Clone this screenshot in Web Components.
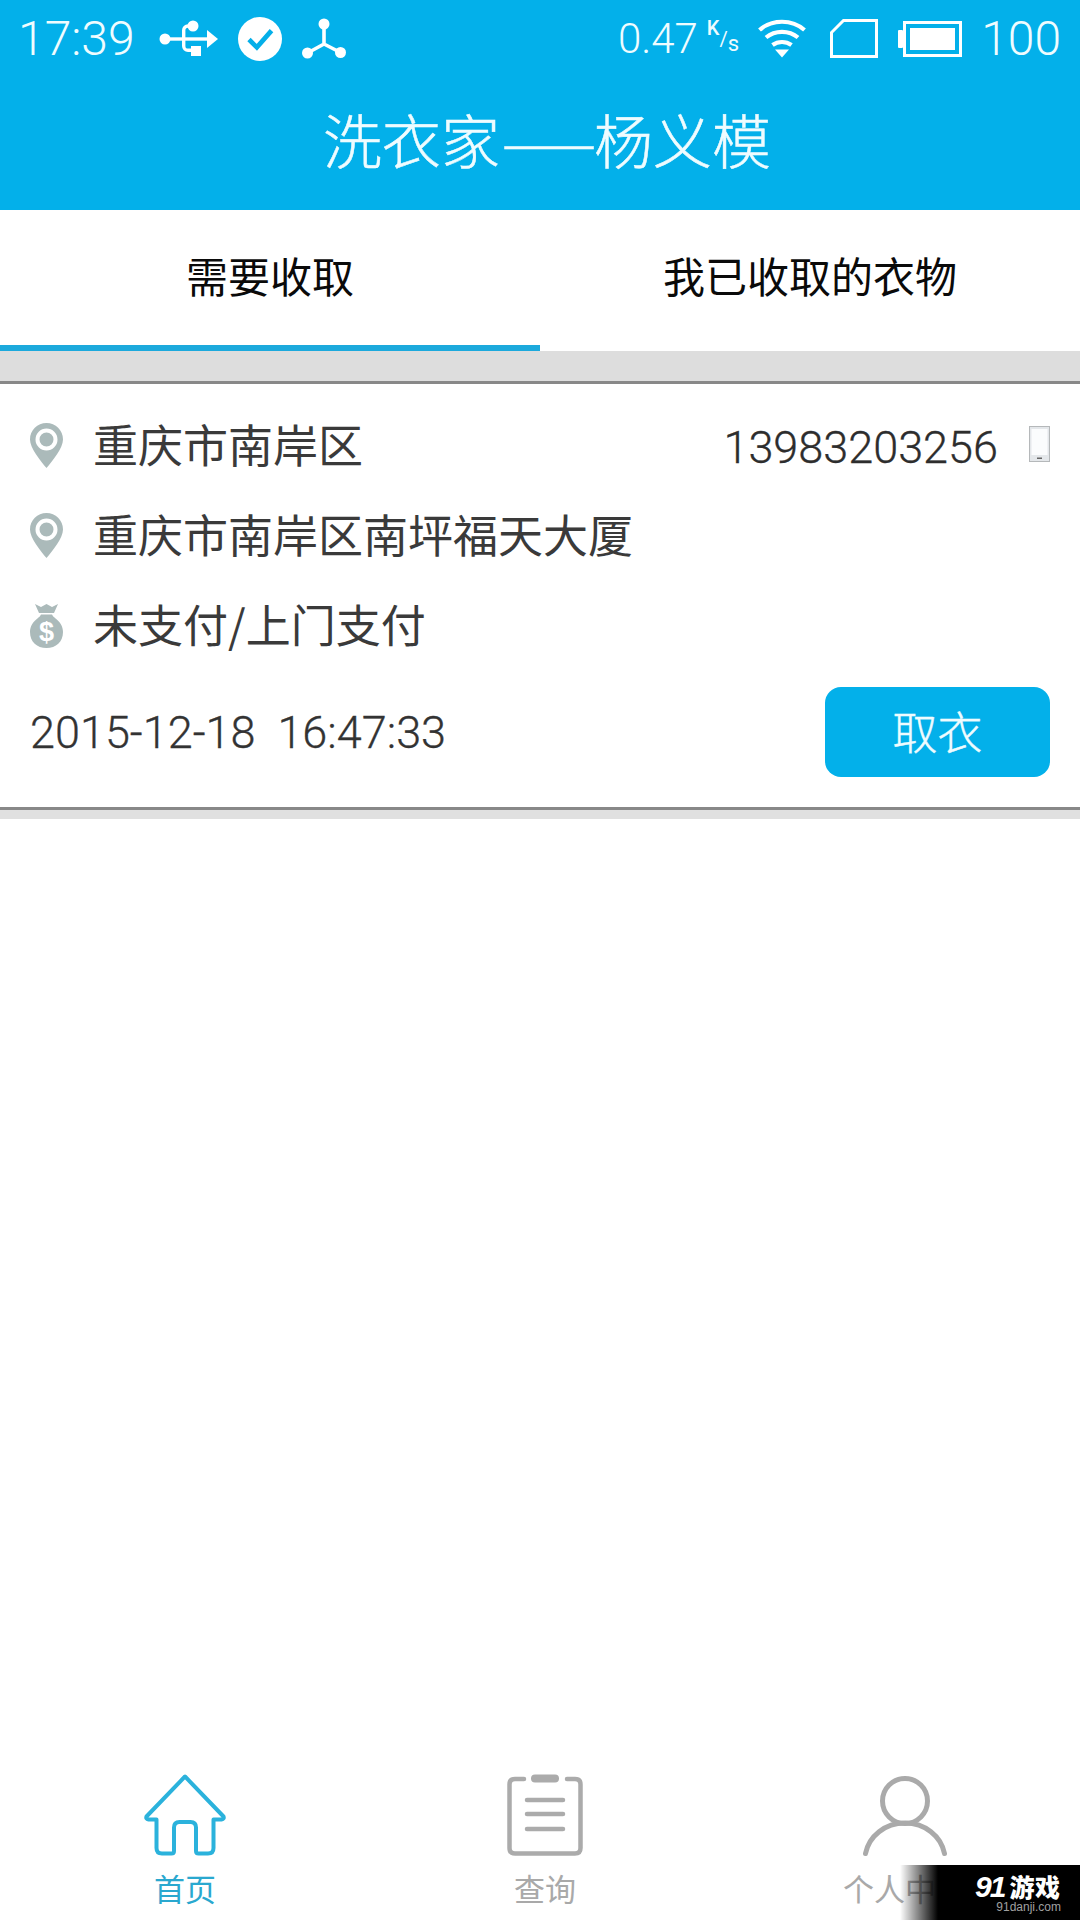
<!DOCTYPE html>
<html lang="zh-CN"><head><meta charset="utf-8">
<style>
html,body{margin:0;padding:0;background:#fff}
body{font-family:"Noto Sans CJK SC","Noto Sans",sans-serif;width:1080px;height:1920px;overflow:hidden}
</style></head>
<body>
<app-shell>
  <app-header></app-header>
  <tab-bar>
    <tab-item active>需要收取</tab-item>
    <tab-item>我已收取的衣物</tab-item>
  </tab-bar>
  <order-card>
    <info-row icon="pin" slot="rows"><span>重庆市南岸区</span><span slot="end">13983203256</span></info-row>
    <info-row icon="pin" slot="rows"><span>重庆市南岸区南坪福天大厦</span></info-row>
    <info-row icon="money" slot="rows"><span>未支付/上门支付</span></info-row>
    <span slot="date">2015-12-18&nbsp;&nbsp;16:47:33</span>
    <span slot="action">取衣</span>
  </order-card>
  <nav-bar>
    <nav-item icon="home" active>首页</nav-item>
    <nav-item icon="clip">查询</nav-item>
    <nav-item icon="user">个人中心</nav-item>
  </nav-bar>
  <water-mark></water-mark>
</app-shell>
<script>
function def(name, html, init){
  customElements.define(name, class extends HTMLElement{
    constructor(){super();this.attachShadow({mode:'open'}).innerHTML=typeof html==='function'?html(this):html;}
    connectedCallback(){ if(init) init(this); }
  });
}
const ICONS={
 usb:`<svg width="60" height="42" viewBox="0 0 60 42" fill="#fff"><circle cx="6" cy="21" r="5.5"/><rect x="6" y="19.3" width="44" height="3.4"/><path d="M48 12l11 9-11 9z"/><circle cx="34" cy="8" r="5.5"/><path d="M34 6.3H29a6 6 0 0 0-6 6V20h3.4v-7.700a2.600 2.600 0 0 1 2.600-2.600h5zM23 22v6a6 6 0 0 0 6 6h5v-3.400h-5a2.600 2.600 0 0 1-2.600-2.600V22z"/><rect x="32" y="28" width="10" height="10"/></svg>`,
 check:`<svg width="44" height="44" viewBox="0 0 42 42"><circle cx="21" cy="21" r="21" fill="#fff"/><path d="M10.500 21.500l7.500 7.500L32 13" fill="none" stroke="#04afe9" stroke-width="4.500"/></svg>`,
 nodes:`<svg width="46" height="42" viewBox="0 0 46 42" fill="#fff"><circle cx="23" cy="6" r="5.500"/><circle cx="6.500" cy="35" r="5.500"/><circle cx="39.500" cy="34.500" r="5.500"/><path d="M23 8v18M23 26L6.500 35M23 26l16.500 8.500" stroke="#fff" stroke-width="3.600" fill="none"/></svg>`,
 wifi:`<svg width="48" height="39" viewBox="0 0 48 38" fill="none" stroke="#fff" stroke-width="4.200"><path d="M1.500 10.500C14 -0.500 34 -0.500 46.500 10.500"/><path d="M8 18c9-7.500 23-7.500 32 0"/><path d="M14.500 25.500c5.500-4 13.500-4 19 0"/><path d="M17 30h14l-7 8z" fill="#fff" stroke="none"/></svg>`,
 sim:`<svg width="48" height="39" viewBox="0 0 48 39" fill="none" stroke="#fff" stroke-width="3"><path d="M1.500 37.500V13.500L13.500 1.500H46.500V37.500Z"/></svg>`,
 batt:`<svg width="64" height="36" viewBox="0 0 64 36" fill="#fff"><rect x="0" y="9" width="5" height="18" rx="1"/><rect x="6.500" y="1.500" width="56" height="33" fill="none" stroke="#fff" stroke-width="3"/><rect x="12" y="7" width="45" height="22"/></svg>`,
 pin:`<svg width="33" height="45" viewBox="0 0 33 45"><path d="M16.500 0C7.400 0 0 7.300 0 16.400 0 25 10 37 16.500 45 23 37 33 25 33 16.400 33 7.300 25.600 0 16.500 0Z" fill="#abbaba"/><circle cx="16.500" cy="16.500" r="9" fill="#abbaba" stroke="#fff" stroke-width="4"/></svg>`,
 money:`<svg width="33" height="45" viewBox="0 0 33 45"><path d="M5 1l6 3 5.500-3 5.500 3 6-3-4 9H9z" fill="#abbaba"/><path d="M11 11.500h11c1 2 2 2.500 3 3.500 5 3.500 8 8.500 8 14 0 10-7 16-16.500 16S0 39 0 29c0-5.500 3-10.500 8-14 1-1 2-1.500 3-3.500z" fill="#abbaba"/><text x="16.500" y="38" text-anchor="middle" font-family="Liberation Sans" font-weight="700" font-size="27" fill="#fff">$</text></svg>`,
 phone:`<svg width="21" height="36" viewBox="0 0 21 36"><rect x=".5" y=".5" width="20" height="35" fill="#e4e7ea" stroke="#b5b8ba"/><rect x="2.500" y="3" width="16" height="26" fill="#fbfcfd"/><rect x="8" y="31.500" width="5" height="1.500" fill="#666"/></svg>`,
 home:`<svg width="82" height="82" viewBox="0 0 82 82" fill="none" stroke="#2bb2dc" stroke-width="4" stroke-linejoin="round"><path d="M41 2.500L2.500 42.500Q1.500 45 4.500 45.500H12.500V74Q12.500 79.500 18 79.500H27.500Q30 79.500 30 77V53.500Q30 48 35.500 48H46.500Q52 48 52 53.500V77Q52 79.500 54.500 79.500H64Q69.500 79.500 69.500 74V45.500H77.500Q80.500 45 79.500 42.500Z"/></svg>`,
 clip:`<svg width="76" height="82" viewBox="0 0 76 82" fill="none" stroke="#ababab" stroke-width="4.500" stroke-linecap="round"><path d="M17 5H8Q2.500 5 2.500 10.500V74Q2.500 79.500 8 79.500H68Q73.500 79.500 73.500 74V10.500Q73.500 5 68 5H60"/><path d="M28 4.500H48" stroke-width="8"/><path d="M20 26H56M20 40H56M20 55H56"/></svg>`,
 user:`<svg width="84" height="80" viewBox="0 0 84 80" fill="none" stroke="#aaa" stroke-width="5" stroke-linecap="round"><circle cx="42" cy="25" r="22.500"/><path d="M2.500 77.500C6 60 22 47 42 47S78 60 81.500 77.500"/></svg>`
};
def('app-shell',`<style>:host{display:flex;flex-direction:column;width:1080px;height:1920px;position:relative;background:#fff;overflow:hidden}</style><slot></slot>`);
def('app-header',`<style>
:host{display:flex;flex-direction:column;height:210px;background:#03b0ea;color:#effcff;box-sizing:border-box}
.st{display:flex;align-items:center;height:77px;padding:0 19px 0 18px;font:300 48px/77px Roboto,sans-serif}
.g{display:flex;align-items:center}
.l svg{display:block}
.sp{flex:1}
.speed{font-size:42px;margin-right:9px}
.ks{font-size:20px;line-height:22px;margin-right:19px;position:relative;top:-3px;font-weight:400;white-space:nowrap}
.ks i{font-style:normal;font-weight:500;position:relative;top:-8px}.ks u{text-decoration:none;position:relative;top:3px}.ks b{font-weight:400;position:relative;top:8px;font-size:22px}
h1{margin:0;font:300 59px/1 "Noto Sans CJK SC",sans-serif;text-align:center;padding:32px 0 0 14px;color:#effcff;-webkit-text-stroke:.5px #effcff;white-space:nowrap}
h1 span{display:inline-block;width:94px;letter-spacing:2px;text-align:center;transform:scaleX(.96)}
</style>
<div class="st"><span>17:39</span>
<span class="g l" style="margin-left:24px">${ICONS.usb}</span><span class="g l" style="margin-left:19px">${ICONS.check}</span><span class="g l" style="margin-left:19px">${ICONS.nodes}</span>
<span class="sp"></span><span class="speed">0.47</span><span class="ks"><i>K</i><u>/</u><b>s</b></span>
<span class="g l">${ICONS.wifi}</span><span class="g l" style="margin-left:24px">${ICONS.sim}</span><span class="g l" style="margin-left:20px">${ICONS.batt}</span><span style="margin-left:19px;">100</span></div>
<h1>洗衣家<span>——</span>杨义模</h1>`);
def('tab-bar',`<style>:host{display:flex;height:141px;background:#fff;flex:none}</style><slot></slot>`);
def('tab-item',`<style>:host{display:flex;flex:1;align-items:center;justify-content:center;box-sizing:border-box;height:141px;padding-bottom:5px;border-bottom:6px solid transparent;color:#0a0a0a;font:400 42px/1 "Noto Sans CJK SC",sans-serif}
:host([active]){border-bottom-color:#1ca9dc}</style><slot></slot>`);
def('order-card',`<style>
:host{display:block;flex:none;background:#fff;border-top:30px solid #ddd;border-bottom:9px solid #e0e0e0;color:#333}
.in{border-top:3px solid #888;border-bottom:3px solid #888;padding:18px 30px 30px;box-sizing:border-box;height:429px}
.bot{display:flex;align-items:center;justify-content:space-between;margin-top:15px;height:90px}
.date{font:300 45px/90px Roboto,sans-serif;color:#333;-webkit-text-stroke:.3px #333;padding-top:2px}
.btn{width:225px;height:90px;border-radius:16px;background:#03b0ea;color:#effcff;display:flex;align-items:center;justify-content:center;padding-bottom:4px;box-sizing:border-box;font:300 45px/1 "Noto Sans CJK SC",sans-serif;-webkit-text-stroke:.4px #effcff}
</style><div class="in"><slot name="rows"></slot>
<div class="bot"><span class="date"><slot name="date"></slot></span><span class="btn"><slot name="action"></slot></span></div></div>`);
def('info-row',h=>`<style>
:host{display:flex;align-items:center;height:90px;font:400 45px/1 "Noto Sans CJK SC",sans-serif;color:#3a3a3a}
.i{width:33px;height:45px;margin-right:30px;flex:none;position:relative;top:-2px}svg{display:block}
.t{flex:1;padding-bottom:7px}
.e{font:300 45px/1 Roboto,sans-serif;color:#2d2d2d;display:flex;align-items:center;-webkit-text-stroke:.3px #2d2d2d}
.p{margin-left:31px;display:block;position:relative;top:-3px}
</style><span class="i">${ICONS[h.getAttribute('icon')]}</span><span class="t"><slot></slot></span>
<span class="e" id="e"><slot name="end"></slot></span>`,h=>{
  if(h.querySelector('[slot=end]')&&!h.shadowRoot.querySelector('.p')){const s=document.createElement('span');s.className='p';s.innerHTML=ICONS.phone;h.shadowRoot.getElementById('e').appendChild(s);}
});
def('nav-bar',`<style>:host{display:grid;grid-template-columns:repeat(3,360px);padding-left:5px;margin-top:auto;height:146px;flex:none;background:#fff}</style><slot></slot>`);
def('nav-item',h=>`<style>
:host{display:flex;flex-direction:column;align-items:center;color:#a9a9a9;font:400 31px/1 "Noto Sans CJK SC",sans-serif}
:host([active]){color:#2aa8cf}
.ic{height:82px;margin-bottom:16px;display:flex;align-items:flex-end}svg{display:block}
</style><div class="ic">${ICONS[h.getAttribute('icon')]}</div><span><slot></slot></span>`);
def('water-mark',`<style>
:host{position:absolute;right:0;bottom:0;width:180px;height:55px;background:linear-gradient(90deg,rgba(0,0,0,0) 0,#000 38px);color:#fff;display:block}
.w{position:absolute;left:75px;top:6px;font:900 25px/30px "Noto Sans CJK SC",sans-serif;white-space:nowrap;letter-spacing:.5px}
.w em{font:italic 700 30px/30px "Liberation Sans",sans-serif;letter-spacing:-2px;margin-right:5px}
.d{position:absolute;right:19px;top:34px;font:400 12px/17px "Liberation Sans",sans-serif;color:#a0a0a0;white-space:nowrap}
</style><span class="w"><em>91</em>游戏</span><span class="d">91danji.com</span>`);
</script>
</body></html>
